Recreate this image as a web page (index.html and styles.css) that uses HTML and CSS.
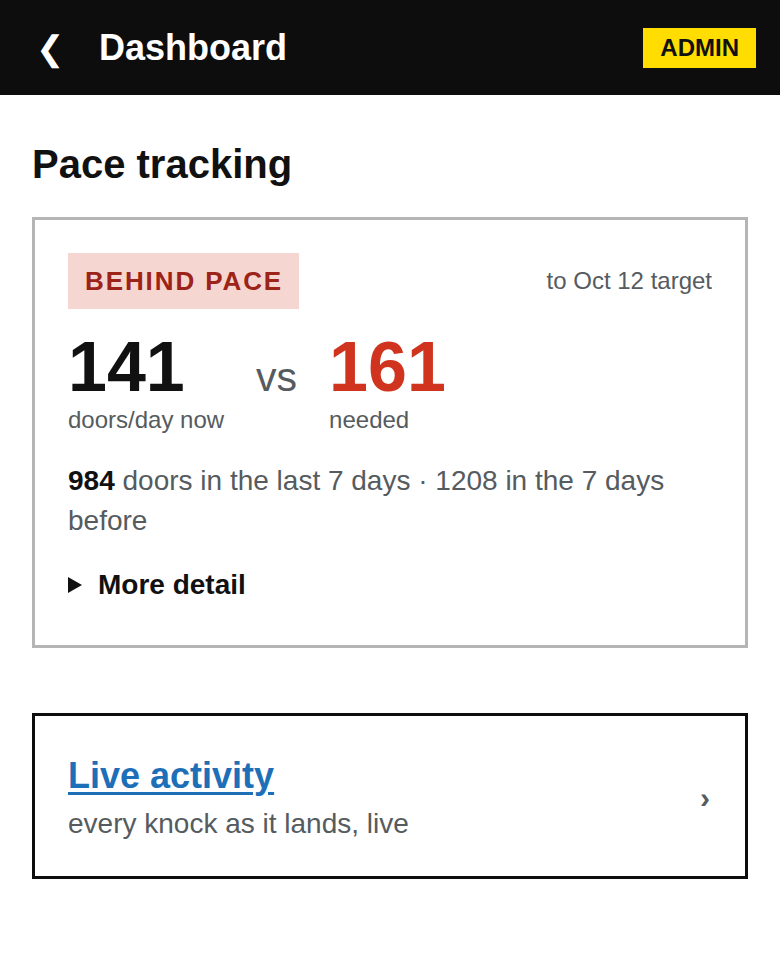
FILE: index.html
```html
<!DOCTYPE html>
<html lang="en">
<head>
<meta charset="utf-8">
<title>Dashboard</title>
<link rel="stylesheet" href="styles.css">
</head>
<body>
<header class="topbar">
  <div class="topbar-left">
    <span class="back">&#10094;</span>
    <h1 class="title">Dashboard</h1>
  </div>
  <span class="admin">ADMIN</span>
</header>
<main class="content">
  <h2 class="section-title">Pace tracking</h2>
  <section class="card pace">
    <div class="pace-top">
      <span class="status">BEHIND PACE</span>
      <span class="target">to Oct 12 target</span>
    </div>
    <div class="stats">
      <div class="stat">
        <div class="num">141</div>
        <div class="label">doors/day now</div>
      </div>
      <div class="vs">vs</div>
      <div class="stat">
        <div class="num red">161</div>
        <div class="label">needed</div>
      </div>
    </div>
    <p class="summary"><strong class="strong">984</strong> doors in the last 7 days · 1208 in the 7 days before</p>
    <div class="more"><span class="tri"></span>More detail</div>
  </section>
  <a class="card link-card" href="#">
    <div class="link-text">
      <span class="link-title">Live activity</span>
      <span class="link-sub">every knock as it lands, live</span>
    </div>
    <span class="chev">&#8250;</span>
  </a>
</main>
</body>
</html>
```
FILE: styles.css
```css
* { box-sizing: border-box; }
body {
  margin: 0;
  font-family: "Liberation Sans", Arial, sans-serif;
  color: #111;
  background: #fff;
}
.topbar {
  height: 95px;
  background: #0d0d0d;
  display: flex;
  align-items: center;
  justify-content: space-between;
  padding: 0 24px 0 36px;
}
.topbar-left {
  display: flex;
  align-items: center;
  gap: 35px;
}
.back {
  color: #fff;
  font-size: 34px;
  line-height: 1;
}
.title {
  margin: 0;
  color: #fff;
  font-size: 36px;
  font-weight: 700;
}
.admin {
  background: #ffdd00;
  color: #111;
  font-weight: 700;
  font-size: 24px;
  padding: 8px 17px;
  line-height: 24px;
}
.content {
  padding: 0 32px;
}
.section-title {
  margin: 47px 0 31px;
  font-size: 40px;
  font-weight: 700;
  line-height: 44px;
}
.card {
  display: block;
  background: #fff;
}
.pace {
  border: 3px solid #b5b5b5;
  padding: 33px 33px 44px;
}
.pace-top {
  display: flex;
  justify-content: space-between;
  align-items: center;
}
.status {
  background: #f6d6d1;
  color: #9b2318;
  font-weight: 700;
  font-size: 26px;
  letter-spacing: 1.9px;
  padding: 14px 16px 14px 17px;
  line-height: 28px;
}
.target {
  color: #555b5e;
  font-size: 24px;
}
.stats {
  display: flex;
  align-items: baseline;
  margin-top: 20px;
}
.stat {
  display: flex;
  flex-direction: column;
}
.num {
  font-size: 70px;
  font-weight: 700;
  line-height: 76px;
}
.red { color: #d0341f; }
.label {
  color: #555b5e;
  font-size: 24px;
  line-height: 30px;
}
.vs {
  color: #555b5e;
  font-size: 41px;
  margin: 0 32px;
}
.summary {
  margin: 26px 0 0;
  color: #555b5e;
  font-size: 28px;
  line-height: 40px;
}
.strong { color: #111; font-weight: 700; }
.more {
  margin-top: 28px;
  display: flex;
  align-items: center;
  gap: 16px;
  font-size: 28px;
  line-height: 32px;
  font-weight: 700;
  color: #111;
}
.tri {
  width: 0;
  height: 0;
  border-left: 14px solid #111;
  border-top: 8px solid transparent;
  border-bottom: 8px solid transparent;
}
.link-card {
  margin-top: 65px;
  border: 3px solid #0d0d0d;
  padding: 40px 35px 36px 33px;
  display: flex;
  align-items: center;
  justify-content: space-between;
  text-decoration: none;
}
.link-text {
  display: flex;
  flex-direction: column;
  gap: 12px;
}
.link-title {
  color: #1d6fb8;
  font-size: 36px;
  line-height: 40px;
  font-weight: 700;
  text-decoration: underline;
  text-decoration-thickness: 3px;
  text-underline-offset: 4px;
}
.link-sub {
  color: #555b5e;
  font-size: 28px;
  line-height: 32px;
}
.chev {
  color: #555b5e;
  font-size: 30px;
  font-weight: 700;
}
```
